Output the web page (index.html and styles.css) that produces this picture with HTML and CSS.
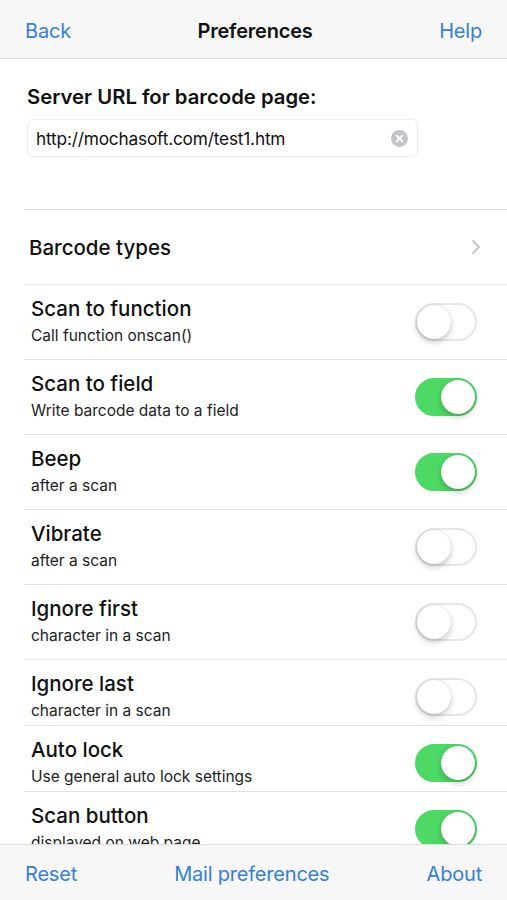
FILE: index.html
```html
<!DOCTYPE html>
<html lang="en">
<head>
    <meta charset="UTF-8">
    <meta name="viewport" content="width=device-width, initial-scale=1.0">
    <title>Preferences</title>
    <link rel="stylesheet" href="styles.css">
</head>
<body>
    <div class="screen">
        <header class="navbar">
            <span class="nav-link">Back</span>
            <span class="nav-title">Preferences</span>
            <span class="nav-link">Help</span>
        </header>

        <main class="content">
            <section class="url-section">
                <div class="url-label">Server URL for barcode page:</div>
                <div class="url-field">
                    <span class="url-text">http://mochasoft.com/test1.htm</span>
                    <span class="clear-btn">
                        <svg width="17" height="17" viewBox="0 0 17 17">
                            <circle cx="8.5" cy="8.5" r="8.5" fill="#c4c4c8"/>
                            <path d="M5.8 5.8 L11.2 11.2 M11.2 5.8 L5.8 11.2" stroke="#fff" stroke-width="2" stroke-linecap="round"/>
                        </svg>
                    </span>
                </div>
            </section>

            <div class="row link-row">
                <span class="link-title">Barcode types</span>
                <svg class="chevron" width="10" height="16" viewBox="0 0 10 16">
                    <path d="M2 2 L8 8 L2 14" fill="none" stroke="#c7c7cc" stroke-width="2" stroke-linecap="round" stroke-linejoin="round"/>
                </svg>
            </div>

            <div class="row">
                <div class="row-text">
                    <div class="row-title">Scan to function</div>
                    <div class="row-sub">Call function onscan()</div>
                </div>
                <span class="toggle"></span>
            </div>
            <div class="row">
                <div class="row-text">
                    <div class="row-title">Scan to field</div>
                    <div class="row-sub">Write barcode data to a field</div>
                </div>
                <span class="toggle on"></span>
            </div>
            <div class="row">
                <div class="row-text">
                    <div class="row-title">Beep</div>
                    <div class="row-sub">after a scan</div>
                </div>
                <span class="toggle on"></span>
            </div>
            <div class="row">
                <div class="row-text">
                    <div class="row-title">Vibrate</div>
                    <div class="row-sub">after a scan</div>
                </div>
                <span class="toggle"></span>
            </div>
            <div class="row">
                <div class="row-text">
                    <div class="row-title">Ignore first</div>
                    <div class="row-sub">character in a scan</div>
                </div>
                <span class="toggle"></span>
            </div>
            <div class="row short">
                <div class="row-text">
                    <div class="row-title">Ignore last</div>
                    <div class="row-sub">character in a scan</div>
                </div>
                <span class="toggle"></span>
            </div>
            <div class="row short">
                <div class="row-text">
                    <div class="row-title">Auto lock</div>
                    <div class="row-sub">Use general auto lock settings</div>
                </div>
                <span class="toggle on"></span>
            </div>
            <div class="row">
                <div class="row-text">
                    <div class="row-title">Scan button</div>
                    <div class="row-sub">displayed on web page</div>
                </div>
                <span class="toggle on"></span>
            </div>
        </main>

        <footer class="toolbar">
            <span class="nav-link">Reset</span>
            <span class="nav-link">Mail preferences</span>
            <span class="nav-link">About</span>
        </footer>
    </div>
</body>
</html>
```

FILE: styles.css
```css
body {
    margin: 0;
    font-family: 'Inter', 'Liberation Sans', sans-serif;
    color: #111;
    background-color: #fff;
}
.screen {
    height: 900px;
    display: flex;
    flex-direction: column;
    overflow: hidden;
}
.navbar, .toolbar {
    display: flex;
    justify-content: space-between;
    align-items: center;
    padding: 0 25px;
    background-color: #f7f7f7;
    flex-shrink: 0;
    box-sizing: border-box;
}
.navbar {
    height: 59px;
    padding-top: 4px;
    border-bottom: 1px solid #dcdcdc;
}
.toolbar {
    height: 56px;
    padding-top: 3px;
    border-top: 1px solid #dcdcdc;
}
.nav-link {
    color: #3580d8;
    font-size: 20px;
    letter-spacing: -0.2px;
}
.nav-title {
    font-size: 20px;
    font-weight: 600;
    letter-spacing: -0.2px;
}
.content {
    flex: 1;
    overflow: hidden;
}
.url-section {
    height: 150px;
    padding: 26px 0 0 27px;
    box-sizing: border-box;
}
.url-label {
    font-size: 20.3px;
    font-weight: 600;
    line-height: 24px;
}
.url-field {
    margin-top: 10px;
    width: 391px;
    height: 38px;
    box-sizing: border-box;
    border: 1px solid #ececec;
    border-radius: 6px;
    display: flex;
    align-items: center;
    justify-content: space-between;
    padding: 0 9px 0 8px;
}
.url-text {
    font-size: 17.3px;
    letter-spacing: -0.2px;
}
.clear-btn {
    display: flex;
}
.row {
    margin-left: 24px;
    height: 75px;
    box-sizing: border-box;
    border-top: 1px solid #e3e3e3;
    display: flex;
    justify-content: space-between;
    align-items: flex-start;
    padding: 0 30px 0 7px;
}
.row.short {
    height: 66px;
}
.link-row {
    align-items: center;
    padding-left: 5px;
    padding-right: 26px;
}
.link-title {
    font-size: 20.5px;
    font-weight: 500;
}
.row-text {
    padding-top: 11px;
}
.row-title {
    font-size: 20.5px;
    font-weight: 500;
    line-height: 26px;
}
.row-sub {
    font-size: 15.5px;
    line-height: 20px;
    margin-top: 4px;
    color: #222;
}
.toggle {
    margin-top: 18px;
    width: 62px;
    height: 38px;
    box-sizing: border-box;
    border-radius: 19px;
    border: 2px solid #e6e6e6;
    background-color: #fff;
    position: relative;
}
.toggle::after {
    content: '';
    position: absolute;
    top: 0;
    left: 0;
    width: 34px;
    height: 34px;
    border-radius: 50%;
    background-color: #fff;
    box-shadow: 0 3px 6px rgba(0, 0, 0, 0.22), 0 0 1px rgba(0, 0, 0, 0.2);
}
.toggle.on {
    background-color: #4cd964;
    border-color: #4cd964;
}
.toggle.on::after {
    left: 24px;
}
```
